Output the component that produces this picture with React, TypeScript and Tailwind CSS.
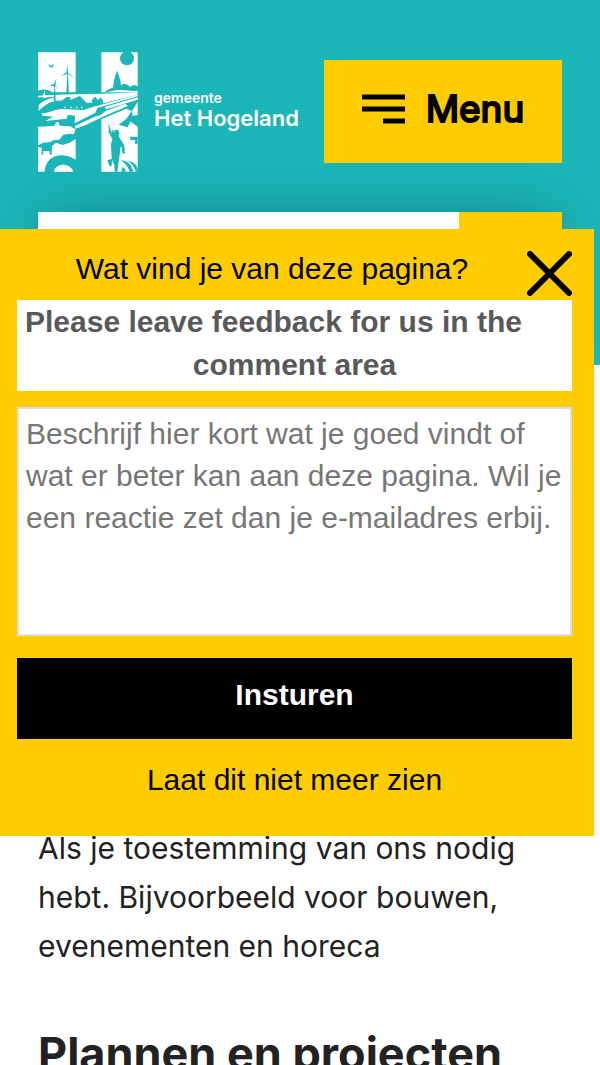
import { useState } from 'react'

function TownLogo() {
  return (
    <svg viewBox="22 23 300 358" className="h-[120px] w-[100px] shrink-0" aria-hidden="true">
      <g fill="#fff">
        <path d="M22 23H135V143H22Z" />
        <path d="M212 23H321V143H212Z" />
        {/* sky behind the farm and the fields */}
        <path d="M60 150L212 147L321 143V150L218 176L210 160L203 168L195 158L186 165L185 174H167L148 154L138 158L119 166V157H108L92 168C70 166 46 176 24 199V182C34 170 54 160 82 157L22 158V152Z" />
        <path d="M32 206C60 205 76 192 94 193L160 196L176 190L321 150V155L200 190L194 204L132 236L133 213L111 210L108 222L44 229L67 216L36 213Z" />
        <path d="M222 187L321 158V165L226 194Z" />
        <path d="M226 198L284 177L291 184L228 211L160 243L133 252L134 243L196 215L208 212Z" />
        <path d="M212 224L286 192L304 199L321 172V211L302 214L300 231L321 246V381H212Z" />
        <path d="M22 246L71 244L75 234L83 231L87 243L118 245L134 254L130 269L117 267L98 270L86 285L70 286L59 292L38 294L22 302Z" />
        <path d="M22 307L34 310L32 330H37L38 319H56L58 330H63L64 304L76 294L96 301L117 294L135 283V345C94 319 45 331 42 381H22Z" />
        <path d="M69 381C75 353 119 353 128 381Z" />
      </g>
      <g fill="#1bb6b8">
        {/* moon and village skyline */}
        <circle cx="289" cy="41" r="21" />
        <path d="M222 144C230 133 241 131 247 129L250 107L259 77L269 107L271 122C282 113 294 120 299 128C304 119 315 121 322 126V138C300 141 287 135 267 136C249 137 239 140 222 144Z" />
        {/* windmills */}
        <path d="M110 88L107 149H115L112 88L132 101L112 84L110 58L107 84L91 93L109 89Z" />
        <path d="M71 124L69 169H75L73 124L81 135L74 121L77 103L69 119L55 122L70 125Z" />
        <path d="M53 58L61 64L71 57L64 70L60 66L56 67Z" />
        {/* shore and hedges */}
        <path d="M22 139C34 133 51 132 67 144L96 149L22 153Z" />
        <path d="M183 168L189 159L194 157L202 167L210 158L217 168V175L188 178Z" />
        {/* kite */}
        <path d="M264 240L287 222L304 198L306 217L291 248Z" />
        <path d="M299 276H321V297H313V286H299Z" />
        {/* figure */}
        <path d="M234 235L239 253L243 270L242 258L249 255L248 264L253 256C258 253 268 256 266 267C262 274 268 282 273 289L281 305L283 326L276 328L273 306L270 306L266 336L260 381H252L251 360L244 346L243 364L237 365L230 347L243 343L241 299L245 283L234 263Z" />
        <path d="M272 347C291 348 302 359 308 381H297C293 366 283 357 272 347Z" />
        <path d="M292 348C309 352 318 360 321 372V381H315C311 365 302 356 292 348Z" />
        <path d="M275 367C282 371 285 375 286 381H272Z" />
      </g>
      <g fill="#fff">
        <path d="M36 153L43 137V151L49 153L46 160H38Z" />
        <rect x="102" y="186" width="4" height="4" />
        <rect x="119" y="186" width="4" height="4" />
        <rect x="136" y="186" width="4" height="4" />
        <rect x="151" y="186" width="4" height="4" />
      </g>
    </svg>
  )
}

function Header() {
  return (
    <header className="bg-[#1bb6b8] px-[38px] pt-[52px] pb-[50px]">
      <div className="flex items-center justify-between">
        <a href="#" className="flex items-center gap-4 text-white">
          <TownLogo />
          <span className="flex flex-col pb-1 font-['Inter',sans-serif] font-semibold">
            <span className="text-[14px] leading-4">gemeente</span>
            <span className="text-[22px] leading-6">Het Hogeland</span>
          </span>
        </a>
        <button
          type="button"
          className="mb-0.5 flex h-[103px] w-[238px] items-center justify-center gap-[21px] bg-[#ffcc00] pb-1 text-[37px] text-black"
        >
          <svg viewBox="0 0 43 30" className="h-[30px] w-[43px]" aria-hidden="true">
            <path d="M0 3H43M0 15H43M21 27H43" stroke="#000" strokeWidth="5" />
          </svg>
          <span className="[-webkit-text-stroke:2px_#000]">Menu</span>
        </button>
      </div>
      <form className="mt-10 flex h-[103px] shadow-[0_0_60px_-10px_rgba(0,0,0,0.35)]">
        <input type="search" aria-label="Zoeken" className="min-w-0 flex-1 bg-white px-4" />
        <button type="button" aria-label="Zoek" className="w-[103px] bg-[#ffcc00]" />
      </form>
    </header>
  )
}

function FeedbackPanel({ onClose }: { onClose: () => void }) {
  const [comment, setComment] = useState('')

  return (
    <section
      aria-labelledby="feedback-title"
      className="fixed top-[229px] right-[6px] left-0 flex flex-col bg-[#ffcc00] pt-[22px] pr-[22px] pb-[35px] pl-[17px] font-['Liberation_Sans',Arial,sans-serif] text-[30px] leading-[42px] text-black"
    >
      <div className="flex h-[49px] items-start">
        <h2 id="feedback-title" className="flex-1 text-center leading-9">
          Wat vind je van deze pagina?
        </h2>
        <button type="button" aria-label="Sluiten" onClick={onClose}>
          <svg viewBox="0 0 45 45" className="size-[45px]" aria-hidden="true">
            <path d="M3 3L42 42M42 3L3 42" stroke="#000" strokeWidth="6" strokeLinecap="round" />
          </svg>
        </button>
      </div>
      <label
        htmlFor="feedback-comment"
        className="bg-white px-2 pb-[5px] leading-[43px] font-bold text-[#595959]"
      >
        <span className="block">Please leave feedback for us in the</span>
        <span className="block text-center">comment area</span>
      </label>
      <textarea
        id="feedback-comment"
        value={comment}
        onChange={(e) => setComment(e.target.value)}
        placeholder="Beschrijf hier kort wat je goed vindt of wat er beter kan aan deze pagina. Wil je een reactie zet dan je e-mailadres erbij."
        className="mt-4 h-[229px] resize-none border-2 border-[#dddddd] bg-white px-[7px] py-1 placeholder:text-[#767676]"
      />
      <button type="button" className="mt-[22px] bg-black pt-4 pb-[23px] font-bold text-white">
        Insturen
      </button>
      <button type="button" className="mt-5 self-center" onClick={onClose}>
        Laat dit niet meer zien
      </button>
    </section>
  )
}

export default function App() {
  const [open, setOpen] = useState(true)

  return (
    <div className="h-screen overflow-hidden bg-white font-['Inter',sans-serif] text-[#222222]">
      <Header />
      <main className="px-[38px] pt-[459px]">
        <p className="text-[30px] leading-[49px]">
          Als je toestemming van ons nodig hebt. Bijvoorbeeld voor bouwen, evenementen en horeca
        </p>
        <h2 className="mt-14 text-[45px] leading-[54px] font-bold">Plannen en projecten</h2>
      </main>
      {open ? <FeedbackPanel onClose={() => setOpen(false)} /> : null}
    </div>
  )
}
